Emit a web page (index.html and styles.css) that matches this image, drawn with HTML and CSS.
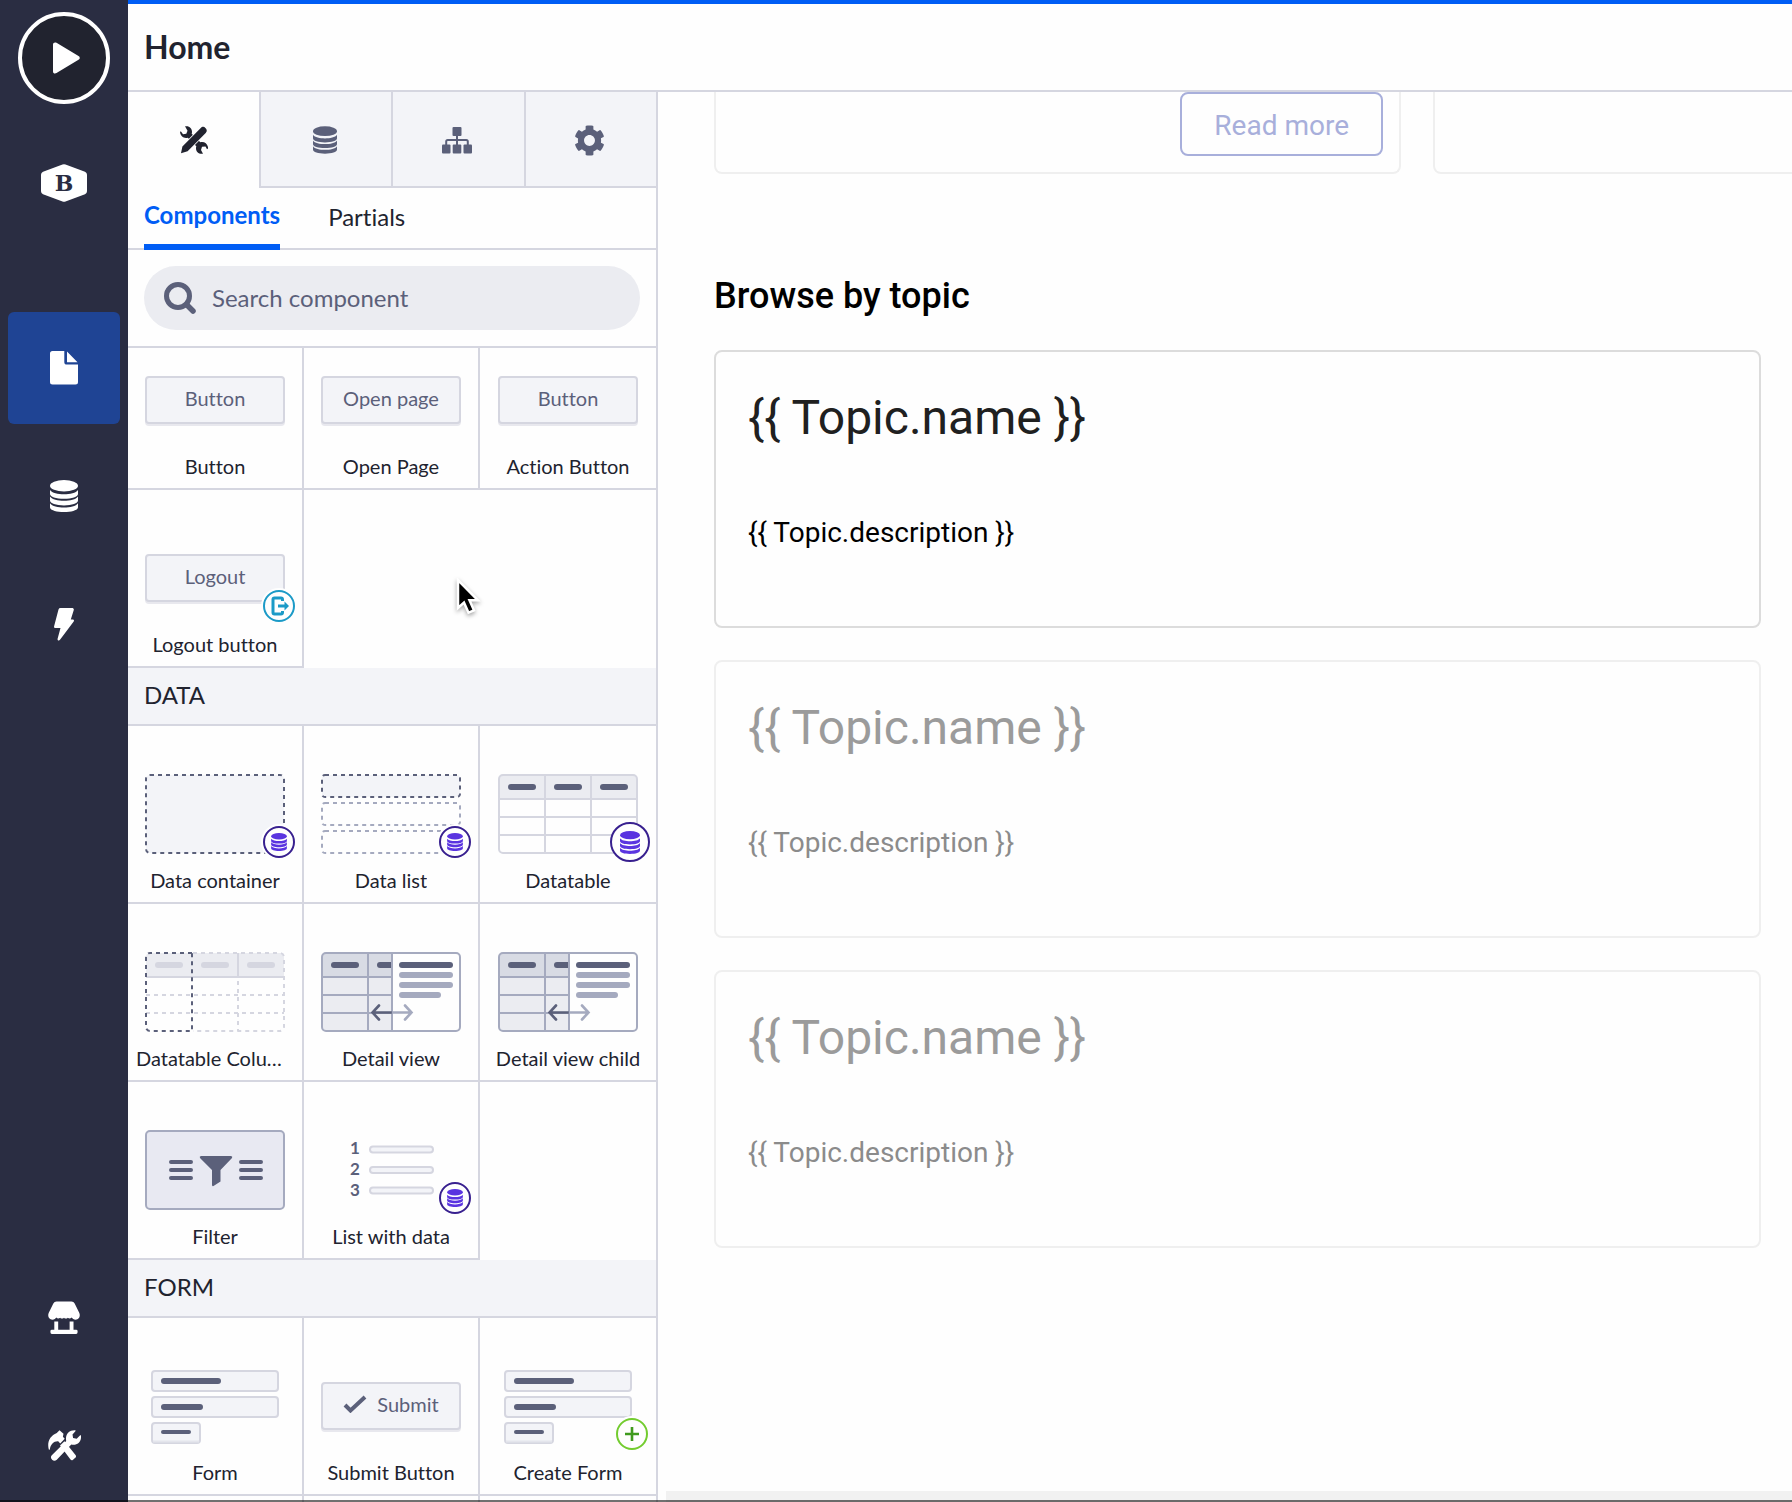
FILE: index.html
```html
<!DOCTYPE html>
<html lang="en">
<head>
<meta charset="utf-8">
<title>Home</title>
<meta name="viewport" content="width=device-width, initial-scale=1">
<link rel="stylesheet" href="styles.css">
</head>
<body>
<svg class="defs" aria-hidden="true">
  <symbol id="db" viewBox="0 0 28 32">
    <ellipse cx="14" cy="5.7" rx="14" ry="5.7"/>
    <path d="M0 10c2 3 8 4.2 14 4.2S26 13 28 10v4c0 3-6 4.8-14 4.8S0 17 0 14z"/>
    <path d="M0 16.6c2 3 8 4.2 14 4.2s12-1.200 14-4.200v4c0 3-6 4.800-14 4.800S0 23.600 0 20.600z"/>
    <path d="M0 23.200c2 3 8 4.200 14 4.200s12-1.200 14-4.200v4c0 3-6 4.800-14 4.800S0 30.200 0 27.200z"/>
  </symbol>
  <symbol id="detail" viewBox="0 0 140 80">
    <rect x="1" y="1" width="138" height="78" rx="4" fill="#fefefe"/>
    <path d="M71 1H5a4 4 0 0 0-4 4v70a4 4 0 0 0 4 4h66z" fill="#ebecf1"/>
    <path d="M71 1H5a4 4 0 0 0-4 4v20h70z" fill="#d8dbe4"/>
    <path d="M1 25h70M1 43h70M1 61h70M47 1v78M71 1v78" stroke="#a5aabf" stroke-width="2" fill="none"/>
    <rect x="1" y="1" width="138" height="78" rx="4" fill="none" stroke="#a5aabf" stroke-width="2"/>
    <rect x="10" y="10" width="28" height="6" rx="3" fill="#5b607a"/>
    <path d="M59 10h11v6H59a3 3 0 0 1 0-6z" fill="#5b607a"/>
    <rect x="78" y="10" width="54" height="6" rx="3" fill="#5b607a"/>
    <rect x="78" y="20" width="54" height="6" rx="3" fill="#a5aabf"/>
    <rect x="78" y="30" width="54" height="6" rx="3" fill="#a5aabf"/>
    <rect x="78" y="40" width="42" height="6" rx="3" fill="#a5aabf"/>
    <path d="M70 60.500H51.500M58 53.500l-6.500 7 6.500 7" fill="none" stroke="#5b607a" stroke-width="2.600" stroke-linecap="round"/>
    <path d="M72 60.500h18.500M84 53.500l6.500 7-6.500 7" fill="none" stroke="#a5aabf" stroke-width="2.600" stroke-linecap="round"/>
  </symbol>
  <symbol id="form" viewBox="0 0 140 80">
    <g fill="#f3f4f8" stroke="#d5d6e0" stroke-width="2">
      <rect x="7" y="5" width="126" height="20" rx="3"/>
      <rect x="7" y="31" width="126" height="20" rx="3"/>
      <rect x="7" y="57" width="48" height="20" rx="3"/>
    </g>
    <path d="M8 75.500h46" stroke="#e4e5ec" stroke-width="2"/>
    <path d="M19 15h54M19 41h36" stroke="#5b607a" stroke-width="6" stroke-linecap="round"/>
    <path d="M18 66h26" stroke="#5b607a" stroke-width="4" stroke-linecap="round"/>
  </symbol>
</svg>

<nav class="rail" aria-label="Workspace">
  <button class="play" aria-label="Preview"><svg width="27" height="32" viewBox="0 0 27 32"><path d="M0 2.500C0 .5 2 0 3.500.800L25.500 14c1.700 1 1.700 2.800 0 3.800L3.500 31C2 31.900 0 31.400 0 29.400z" fill="#fff"/></svg></button>
  <a class="logo" href="#" aria-label="Builder"><svg width="46" height="38" viewBox="0 0 46 38"><path d="M21.500.500q1.500-.6 3 0L44 7.800q2 .8 2 3v16.400q0 2.200-2 3L24.500 37.500q-1.500.6-3 0L2 30.200q-2-.8-2-3V10.800q0-2.200 2-3z" fill="#fff"/><text class="logo-letter" x="23" y="27" text-anchor="middle">B</text></svg></a>
  <div class="rail-group">
    <a class="rail-item is-active" href="#" aria-label="Pages"><svg width="28" height="34" viewBox="0 0 28 34"><path d="M2.500 0H14.300v11q0 2.600 2.600 2.600H28V31q0 2.500-2.500 2.500h-23Q0 33.500 0 31V2.500Q0 0 2.500 0zM17 .5 27.500 11.300H17z" fill="#fff"/></svg></a>
    <a class="rail-item" href="#" aria-label="Data model"><svg width="28" height="32" fill="#fff"><use href="#db"/></svg></a>
    <a class="rail-item" href="#" aria-label="Actions"><svg width="20" height="33" viewBox="0 0 20 33"><path d="M4.500 1.400Q5 0 6.500 0H18c1.400 0 2.200 1 1.700 2.300L16.800 11.500h2q1.800.3.9 2L6 31.800c-1 1.400-2.800.7-2.400-1L6.500 20H1.400C.4 20-.2 19.200.1 18.200z" fill="#fff"/></svg></a>
  </div>
  <div class="rail-group rail-bottom">
    <a class="rail-item" href="#" aria-label="Block store"><svg width="32" height="34" viewBox="0 0 33 34"><path d="M5.500 2Q6.500 0 8.800 0h15.400q2.300 0 3.300 2l4.700 9.500c1.500 3.500 0 7-3.700 7.200-2 0-3.300-1-4-2.200-1.500 1.300-3 1.300-4 .2-1.200 1.200-3 1.200-4 0-1.200 1.200-3 1.200-4 0-1.200 1.100-2.700 1.100-4-.2-.7 1.200-2 2.200-4 2.200C.8 18.500-.7 15 .8 11.500zM6.500 20.500h4V29H22.300V20.500h4V29H29q1.500 0 1.500 1.500v1.300q0 1.700-1.500 1.700H4q-1.500 0-1.500-1.700v-1.300Q2.500 29 4 29h2.500z" fill="#fff"/></svg></a>
    <a class="rail-item" href="#" aria-label="Tools"><svg width="33" height="32" viewBox="0 0 33 32"><g fill="#fff"><path d="M.8 19.500C-1.200 12 2 5.800 8.800 3L11.500.3l4 3.500-.6 3 1.800 2-4.500 4.700-2-2.200C6 11 2.500 14 1.800 19.800z"/><path d="M12 15.500l4.500-4.200L27.500 25c.9 1.200.6 2-.2 2.800L25 29.800c-1 .8-1.700.7-2.500-.2z"/><path d="M3.800 25.200 18.200 11C17 4.500 21 0 27 .2l.8.600L24.500 4.500l.6 3.600 3.600.6 3.700-3.600.6.700C33.600 12 29 15.800 23.300 14.500L8.800 29.700c-1.500 1.500-3.400 1.400-4.700.1-1.400-1.300-1.600-3.200-.3-4.600z"/></g></svg></a>
  </div>
</nav>

<div class="app">
  <header class="topbar"><h1>Home</h1></header>
  <div class="work">
    <section class="panel" aria-label="Builder panel">
      <div class="tabs" role="tablist">
        <button class="tab is-active" role="tab" aria-selected="true" aria-label="Components"><svg width="28" height="28" viewBox="0 0 28 28"><path d="M5 .3C10 -.8 13 3.500 11.700 7.800L14 10 10 14 7.800 11.700C4 12.800.2 10.300 0 5.500l1.200.2L3 8.200 6.300 7.800 7.500 4.700z" fill="#21232f"/><path d="M23 27.700C18 28.500 15 24.500 16.300 20.200L14 18l4-4 2.300 2.300C24 15 28 17.800 28.200 22.500L27 23.200 25.500 20.500 22 20.800 21 24z" fill="#21232f"/><path d="M1 27.200 2.400 20.500 20.500 2.200c2-2 3.600-1.600 4.900-.3s2.200 3 .3 5L7.600 25.200z" fill="#21232f" stroke="#fefefe" stroke-width="1.600" paint-order="stroke"/></svg></button>
        <button class="tab" role="tab" aria-label="Data"><svg width="24" height="28" fill="#5b607a"><use href="#db"/></svg></button>
        <button class="tab" role="tab" aria-label="Page tree"><svg width="30" height="27" viewBox="0 0 30 27" fill="#5b607a"><rect x="10.500" width="9" height="9" rx="1"/><rect y="17.500" width="8.500" height="9" rx="1"/><rect x="10.700" y="17.500" width="8.600" height="9" rx="1"/><rect x="21.500" y="17.500" width="8.500" height="9" rx="1"/><path d="M15 8v10M4.200 18v-3.500q0-1.500 1.500-1.500h18.600q1.500 0 1.500 1.500V18" fill="none" stroke="#5b607a" stroke-width="2"/></svg></button>
        <button class="tab" role="tab" aria-label="Settings"><svg width="31" height="31" viewBox="0 0 512 512"><path fill="#5b607a" d="M487.400 315.700l-42.600-24.600c4.300-23.200 4.300-47 0-70.200l42.600-24.600c4.900-2.800 7.100-8.600 5.500-14-11.100-35.600-30-67.800-54.700-94.600-3.800-4.100-10-5.100-14.800-2.300L380.800 110c-17.900-15.400-38.500-27.300-60.800-35.100V25.800c0-5.600-3.900-10.500-9.400-11.700-36.700-8.200-74.300-7.800-109.200 0-5.500 1.200-9.400 6.100-9.400 11.700V75c-22.200 7.900-42.800 19.800-60.800 35.100L88.700 85.500c-4.900-2.800-11-1.900-14.800 2.300-24.700 26.700-43.600 58.900-54.700 94.600-1.700 5.400.6 11.200 5.500 14L67.300 221c-4.300 23.200-4.300 47 0 70.200l-42.600 24.600c-4.900 2.800-7.100 8.600-5.500 14 11.100 35.600 30 67.800 54.700 94.600 3.800 4.100 10 5.100 14.800 2.300l42.600-24.600c17.900 15.400 38.500 27.300 60.800 35.100v49.200c0 5.600 3.900 10.500 9.400 11.700 36.700 8.200 74.300 7.800 109.200 0 5.500-1.200 9.400-6.100 9.400-11.700v-49.200c22.200-7.900 42.800-19.800 60.800-35.100l42.600 24.600c4.900 2.800 11 1.900 14.800-2.300 24.700-26.700 43.600-58.900 54.700-94.600 1.500-5.500-.7-11.300-5.600-14.100zM256 346c-49.700 0-90-40.300-90-90s40.300-90 90-90 90 40.300 90 90-40.300 90-90 90z"/></svg></button>
      </div>
      <div class="subtabs" role="tablist">
        <button class="subtab is-active" role="tab" aria-selected="true">Components</button>
        <button class="subtab" role="tab">Partials</button>
      </div>
      <div class="search-row">
        <label class="search">
          <svg width="34" height="34" viewBox="0 0 34 34" aria-hidden="true"><circle cx="16" cy="15" r="11.500" fill="none" stroke="#5b607a" stroke-width="5"/><path d="M24.500 23.500 31 30" stroke="#5b607a" stroke-width="5.500" stroke-linecap="round"/></svg>
          <input type="search" placeholder="Search component" aria-label="Search component">
        </label>
      </div>
      <div class="list">
        <div class="grid">
          <button class="cell is-clipped"><span class="thumb"><span class="chip">Button</span></span><span class="name">Button</span></button>
          <button class="cell is-clipped"><span class="thumb"><span class="chip">Open page</span></span><span class="name">Open Page</span></button>
          <button class="cell is-clipped"><span class="thumb"><span class="chip">Button</span></span><span class="name">Action Button</span></button>
          <button class="cell"><span class="thumb"><span class="chip">Logout</span><span class="badge badge-auth"><svg width="20" height="20" viewBox="0 0 20 20"><path d="M13.500 5V3.500Q13.500 2 12 2H5.500Q4 2 4 3.500v13Q4 18 5.500 18H12q1.500 0 1.500-1.500V15M9 10h8" fill="none" stroke="#1b9ac7" stroke-width="3"/><path d="M15.500 5.500 20 10l-4.500 4.500z" fill="#1b9ac7"/></svg></span></span><span class="name">Logout button</span></button>
        </div>
        <h2 class="group-title">DATA</h2>
        <div class="grid">
          <button class="cell"><span class="thumb"><svg width="140" height="80" viewBox="0 0 140 80"><rect x="1" y="1" width="138" height="78" rx="4" fill="#f3f4f8" stroke="#5b607a" stroke-width="2" stroke-dasharray="4 4"/></svg><span class="badge badge-data"><svg width="16" height="18"><use href="#db"/></svg></span></span><span class="name">Data container</span></button>
          <button class="cell"><span class="thumb"><svg width="140" height="80" viewBox="0 0 140 80" fill="none" stroke-width="2" stroke-dasharray="4 4"><rect x="1" y="1" width="138" height="22" rx="3" fill="#f3f4f8" stroke="#5b607a"/><rect x="1" y="29" width="138" height="22" rx="3" stroke="#a5aabf"/><rect x="1" y="57" width="138" height="22" rx="3" stroke="#a5aabf"/></svg><span class="badge badge-data"><svg width="16" height="18"><use href="#db"/></svg></span></span><span class="name">Data list</span></button>
          <button class="cell"><span class="thumb"><svg width="140" height="80" viewBox="0 0 140 80"><path d="M1 25V5a4 4 0 0 1 4-4h130a4 4 0 0 1 4 4v20z" fill="#ebecf1"/><g fill="none" stroke="#d5d6e0" stroke-width="2"><rect x="1" y="1" width="138" height="78" rx="4"/><path d="M1 25h138M1 43h138M1 61h138M47 1v78M93 1v78"/></g><g fill="#5b607a"><rect x="10" y="10" width="28" height="6" rx="3"/><rect x="56" y="10" width="28" height="6" rx="3"/><rect x="102" y="10" width="28" height="6" rx="3"/></g></svg><span class="badge badge-data is-large"><svg width="20" height="23"><use href="#db"/></svg></span></span><span class="name">Datatable</span></button>

          <button class="cell"><span class="thumb"><svg width="140" height="80" viewBox="0 0 140 80"><path d="M1 25V5a4 4 0 0 1 4-4h130a4 4 0 0 1 4 4v20z" fill="#ebecf1"/><g fill="none" stroke="#d5d6e0" stroke-width="2"><path d="M1 25h138M93 1v24"/><path d="M48 1h87a4 4 0 0 1 4 4v70a4 4 0 0 1-4 4H48M1 43h138M1 61h138M93 29v50" stroke-dasharray="4 4"/></g><path d="M47 1H5a4 4 0 0 0-4 4v70a4 4 0 0 0 4 4h42V1" fill="none" stroke="#5b607a" stroke-width="2" stroke-dasharray="4 4"/><g fill="#d5d6e0"><rect x="10" y="10" width="28" height="6" rx="3"/><rect x="56" y="10" width="28" height="6" rx="3"/><rect x="102" y="10" width="28" height="6" rx="3"/></g></svg></span><span class="name">Datatable Column</span></button>
          <button class="cell"><span class="thumb"><svg width="140" height="80"><use href="#detail"/></svg></span><span class="name">Detail view</span></button>
          <button class="cell"><span class="thumb"><svg width="140" height="80"><use href="#detail"/></svg></span><span class="name">Detail view child</span></button>

          <button class="cell"><span class="thumb"><svg width="140" height="80" viewBox="0 0 140 80"><rect x="1" y="1" width="138" height="78" rx="4" fill="#e8e9f2" stroke="#a5aabf" stroke-width="2"/><path d="M26 32h20M26 40h20M26 48h20M96 32h20M96 40h20M96 48h20" stroke="#5b607a" stroke-width="4" stroke-linecap="round"/><path d="M56 26h30q2 .5 1 2L75.500 40v11.500l-7 4.500q-1.500.5-1.500-1V40L55 28q-1-1.500 1-2z" fill="#5b607a"/></svg></span><span class="name">Filter</span></button>
          <button class="cell"><span class="thumb"><svg width="140" height="80" viewBox="0 0 140 80"><g class="ordinal"><text x="29" y="24">1</text><text x="29" y="45">2</text><text x="29" y="66">3</text></g><g fill="#f3f4f8" stroke="#d5d6e0" stroke-width="2"><rect x="49" y="16.500" width="63" height="6" rx="3"/><rect x="49" y="37" width="63" height="6" rx="3"/><rect x="49" y="57.500" width="63" height="6" rx="3"/></g></svg><span class="badge badge-data"><svg width="16" height="18"><use href="#db"/></svg></span></span><span class="name">List with data</span></button>
        </div>
        <h2 class="group-title">FORM</h2>
        <div class="grid">
          <button class="cell"><span class="thumb"><svg width="140" height="80"><use href="#form"/></svg></span><span class="name">Form</span></button>
          <button class="cell"><span class="thumb"><span class="chip"><svg width="24" height="18" viewBox="0 0 24 18"><path d="M2 10l5.500 5.500L22 2" fill="none" stroke="#5b607a" stroke-width="4"/></svg>Submit</span></span><span class="name">Submit Button</span></button>
          <button class="cell"><span class="thumb"><svg width="140" height="80"><use href="#form"/></svg><span class="badge badge-add"><svg width="16" height="16" viewBox="0 0 16 16"><path d="M8 1v14M1 8h14" stroke="#3f9a1d" stroke-width="2.600"/></svg></span></span><span class="name">Create Form</span></button>
          <div class="cell"></div>
          <div class="cell"></div>
          <div class="cell"></div>
        </div>
      </div>
    </section>

    <main class="canvas">
      <div class="page">
        <div class="articles">
          <article class="article"><button class="read-more">Read more</button></article>
          <article class="article"></article>
        </div>
        <h2 class="page-title">Browse by topic</h2>
        <div class="topics">
          <article class="topic"><h3>{{ Topic.name }}</h3><p>{{ Topic.description }}</p></article>
          <article class="topic is-ghost"><h3>{{ Topic.name }}</h3><p>{{ Topic.description }}</p></article>
          <article class="topic is-ghost"><h3>{{ Topic.name }}</h3><p>{{ Topic.description }}</p></article>
        </div>
      </div>
      <div class="canvas-foot"></div>
    </main>
  </div>
</div>
<svg class="pointer" width="28" height="40" viewBox="0 0 28 40" aria-hidden="true"><path d="M2 2v28l6-5.500 4.500 10.200 5.500-2.400-4.500-10H22z" fill="#000" stroke="#fff" stroke-width="2.500"/></svg>
</body>
</html>
```
FILE: styles.css
```css
:root {
  --ink: #21232f;
  --slate: #5b607a;
  --line: #d5d6e0;
  --soft: #f3f4f8;
  --paper: #fefefe;
  --blue: #005df5;
  --rail: #2a2d42;
}

* { box-sizing: border-box; }

body {
  margin: 0;
  height: 100vh;
  display: flex;
  overflow: hidden;
  background: var(--paper);
  color: var(--ink);
  font-family: Lato, "Liberation Sans", sans-serif;
  font-variant-ligatures: none;
}

body::after {
  content: "";
  position: fixed;
  inset: auto 0 0 0;
  height: 2px;
  background: rgba(0, 0, 0, 0.56);
}

button {
  margin: 0;
  padding: 0;
  border: 0;
  background: none;
  color: inherit;
  font: inherit;
  font-variant-ligatures: none;
}

h1, h2, h3, p { margin: 0; }
svg { display: block; flex: none; }
.defs { position: absolute; width: 0; height: 0; }

/* Left rail */
.rail {
  flex: none;
  width: 128px;
  padding-top: 12px;
  display: flex;
  flex-direction: column;
  align-items: center;
  background: var(--rail);
}
.play {
  flex: none;
  width: 92px;
  height: 92px;
  padding-left: 4px;
  display: flex;
  align-items: center;
  justify-content: center;
  border: 4px solid #fff;
  border-radius: 50%;
  background: #21232f;
}
.logo { margin: 60px 0 110px; }
.logo-letter {
  font: bold 22px "DejaVu Serif", serif;
  fill: var(--rail);
}
.rail-group {
  display: flex;
  flex-direction: column;
  gap: 16px;
}
.rail-bottom { margin-top: auto; }
.rail-item {
  width: 112px;
  height: 112px;
  display: flex;
  align-items: center;
  justify-content: center;
  border-radius: 6px;
}
.rail-item.is-active { background: #1f4494; }

/* Frame */
.app {
  flex: 1;
  min-width: 0;
  display: flex;
  flex-direction: column;
}
.topbar {
  flex: none;
  height: 92px;
  padding: 0 16px;
  display: flex;
  align-items: center;
  border-top: 4px solid var(--blue);
  border-bottom: 2px solid var(--line);
}
.topbar h1 {
  font-size: 32px;
  line-height: 40px;
  font-weight: 700;
}
.work {
  flex: 1;
  min-height: 0;
  display: flex;
}

/* Component panel */
.panel {
  flex: none;
  width: 530px;
  display: flex;
  flex-direction: column;
  border-right: 2px solid var(--line);
}
.tabs {
  flex: none;
  display: grid;
  grid-template-columns: 131px repeat(3, 1fr);
  height: 96px;
}
.tab {
  padding: 2px 2px 0 0;
  display: flex;
  align-items: center;
  justify-content: center;
  border-left: 2px solid var(--line);
  border-bottom: 2px solid var(--line);
  background: var(--soft);
}
.tab.is-active {
  border-color: transparent;
  background: none;
}
.subtabs {
  flex: none;
  height: 62px;
  padding: 0 16px;
  display: flex;
  gap: 48px;
  border-bottom: 2px solid var(--line);
}
.subtab {
  margin-bottom: -2px;
  padding-bottom: 6px;
  font-size: 24px;
  line-height: 29px;
}
.subtab.is-active {
  padding-bottom: 4px;
  border-bottom: 6px solid var(--blue);
  color: var(--blue);
  font-weight: 700;
}
.search-row {
  flex: none;
  padding: 16px;
  border-bottom: 2px solid var(--line);
}
.search {
  height: 64px;
  padding: 0 32px 0 18px;
  display: flex;
  align-items: center;
  gap: 16px;
  border-radius: 32px;
  background: #ebecf1;
}
.search input {
  flex: 1;
  min-width: 0;
  padding: 0 0 2px;
  border: 0;
  outline: 0;
  background: none;
  color: var(--slate);
  font: 24px/29px Lato, "Liberation Sans", sans-serif;
}
.search input::placeholder { color: var(--slate); opacity: 1; }

.list {
  flex: 1;
  min-height: 0;
  overflow: hidden;
}
.grid {
  display: grid;
  grid-template-columns: repeat(3, 1fr);
}
.cell {
  height: 178px;
  min-width: 0;
  padding: 0 8px 10px;
  display: flex;
  flex-direction: column;
  align-items: center;
  justify-content: flex-end;
  gap: 14px;
  border-right: 2px solid var(--line);
  border-bottom: 2px solid var(--line);
}
.cell:nth-child(3n) { border-right: 0; }
.cell.is-clipped { height: 142px; }
.thumb {
  position: relative;
  width: 140px;
  height: 80px;
  display: flex;
  align-items: center;
}
.name {
  max-width: 100%;
  overflow: hidden;
  white-space: nowrap;
  text-overflow: ellipsis;
  font-size: 20px;
  line-height: 24px;
}
.chip {
  flex: 1;
  height: 48px;
  padding-bottom: 4px;
  display: flex;
  align-items: center;
  justify-content: center;
  gap: 10px;
  border: 2px solid var(--line);
  border-radius: 4px;
  background: var(--soft);
  box-shadow: 0 2px 0 #e8e8ee;
  color: var(--slate);
  font-size: 20px;
  line-height: 24px;
}
.badge {
  position: absolute;
  right: -10px;
  bottom: -4px;
  width: 32px;
  height: 32px;
  display: flex;
  align-items: center;
  justify-content: center;
  border: 2px solid;
  border-radius: 50%;
  background: var(--paper);
  box-shadow: 0 0 0 2px var(--paper);
}
.badge.is-large {
  right: -12px;
  bottom: -8px;
  width: 40px;
  height: 40px;
  box-shadow: none;
}
.badge-data { border-color: #38208f; fill: #5a34e0; }
.badge-auth { border-color: #1b9ac7; }
.badge-add { border-color: #73cc2f; }
.ordinal {
  font: bold 17px Lato, sans-serif;
  fill: var(--slate);
}
.group-title {
  height: 58px;
  padding: 0 16px;
  border-bottom: 2px solid var(--line);
  background: var(--soft);
  font-size: 24px;
  line-height: 54px;
  font-weight: 400;
}

/* Page being edited */
.canvas {
  flex: 1;
  min-width: 0;
  display: flex;
  flex-direction: column;
  overflow: hidden;
  font-family: Roboto, "Liberation Sans", sans-serif;
}
.page {
  flex: 1;
  min-height: 0;
  padding: 0 31px 0 56px;
}
.articles {
  display: flex;
  gap: 32px;
}
.article {
  flex: none;
  width: 687px;
  height: 82px;
  padding: 0 16px;
  display: flex;
  align-items: flex-start;
  justify-content: flex-end;
  border: 2px solid #efefef;
  border-top: 0;
  border-radius: 0 0 8px 8px;
}
.read-more {
  height: 64px;
  padding: 2px 32px 0;
  border: 2px solid #a8afdb;
  border-radius: 8px;
  color: #a8afdb;
  font-size: 28px;
  line-height: 33px;
}
.page-title {
  padding: 101px 0 33px;
  color: #000;
  font-size: 36px;
  line-height: 42px;
  font-weight: 500;
}
.topics {
  display: flex;
  flex-direction: column;
  gap: 32px;
}
.topic {
  min-height: 278px;
  padding: 38px 32px;
  display: flex;
  flex-direction: column;
  gap: 70px;
  border: 2px solid #dcdcdc;
  border-radius: 8px;
}
.topic h3 {
  color: #202020;
  font-size: 48px;
  line-height: 56px;
  font-weight: 400;
}
.topic p {
  color: #000;
  font-size: 28px;
  line-height: 33px;
}
.topic.is-ghost { border-color: #efefef; }
.topic.is-ghost h3 { color: #9b9b9b; }
.topic.is-ghost p { color: #8b8b8b; }
.canvas-foot {
  flex: none;
  height: 11px;
  margin-left: 8px;
  background: #f1f1f1;
}

.pointer {
  position: absolute;
  left: 456px;
  top: 578px;
  filter: drop-shadow(0 2px 2px rgba(0, 0, 0, 0.35));
}
```
